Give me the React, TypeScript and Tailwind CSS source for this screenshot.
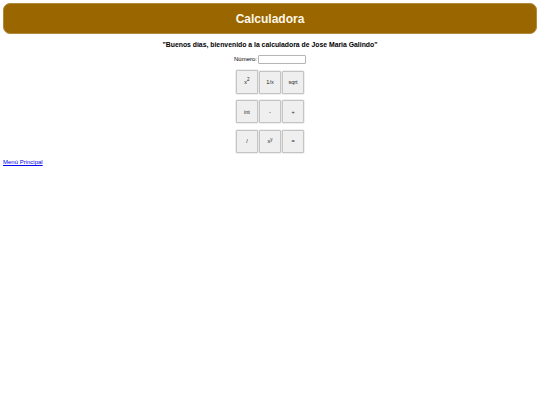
import React from 'react';

const rows = [
  [{ label: <>x<sup className="text-[4.5px]">2</sup></>, tall: true }, { label: '1/x' }, { label: 'sqrt' }],
  [{ label: 'int' }, { label: '-' }, { label: '+' }],
  [{ label: '/' }, { label: <>x<sup className="text-[4.5px]">y</sup></>, tall: true }, { label: '=' }],
];

export default function App() {
  return (
    <div className="bg-white min-h-[405px] font-['Liberation_Sans',Arial,sans-serif] text-black p-[3px]">
      <header className="h-[31px] flex items-center justify-center bg-[#996600] border border-[#b08a3c] rounded-[7px]">
        <h1 className="text-[12px] font-bold text-[#fff8e8]">Calculadora</h1>
      </header>

      <p className="mt-[6px] text-center text-[6.85px] leading-[9px] font-bold">
        "Buenos días, bienvenido a la calculadora de Jose Maria Galindo"
      </p>

      <div className="mt-[6px] flex items-center justify-center gap-[1px] text-[6px]">
        <label>Número:</label>
        <input type="text" className="w-[48px] h-[9px] bg-white border border-[#b5b5b5] rounded-[1px]" />
      </div>

      <div className="mt-[6px] flex flex-col items-center gap-[6.25px]">
        {rows.map((row, i) => (
          <div key={i} className="h-[23.5px] flex items-end gap-[1px]">
            {row.map((btn, j) => (
              <button
                key={j}
                className={`w-[22px] ${btn.tall ? 'h-[23.5px]' : 'h-[23px]'} flex items-center justify-center bg-[#efefef] border border-[#c4c4c4] rounded-[1px] shadow-[0_0_0_0.5px_#dddddd] text-[5.5px] text-[#222]`}
              >
                <span>{btn.label}</span>
              </button>
            ))}
          </div>
        ))}
      </div>

      <a href="#" className="block mt-[5px] text-[6px] leading-[8px] text-[#0000ee] underline">
        Menú Principal
      </a>
    </div>
  );
}
